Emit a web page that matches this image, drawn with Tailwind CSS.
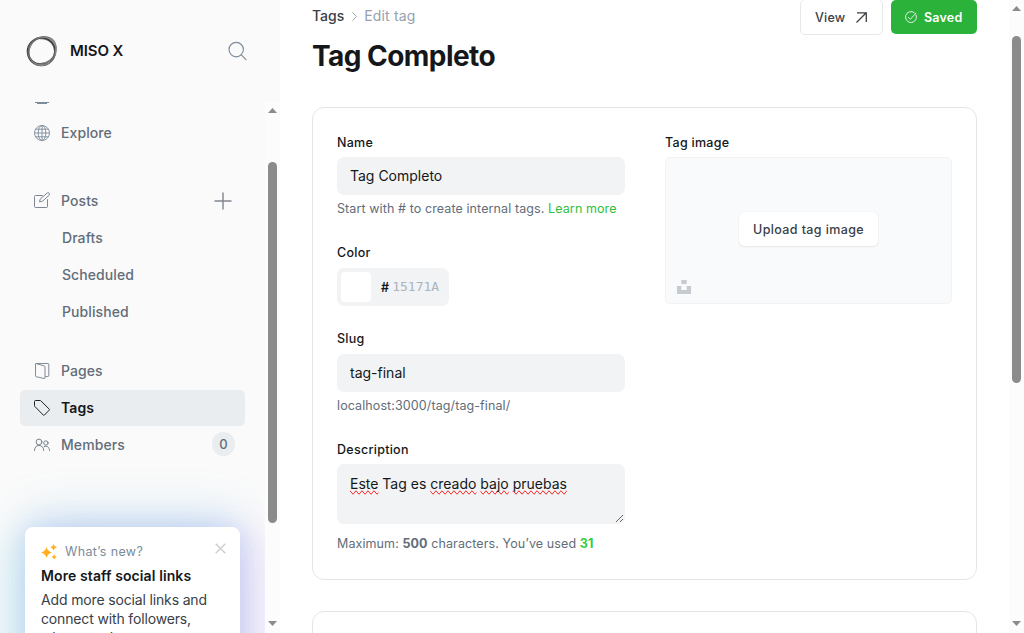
<!DOCTYPE html>
<html lang="en">
<head>
<meta charset="utf-8">
<title>Tags - MISO X</title>
<script src="https://cdn.jsdelivr.net/npm/@tailwindcss/browser@4"></script>
</head>
<body class="h-[633px] w-[1024px] overflow-hidden bg-white font-['Inter',sans-serif] text-[#15171a]">
<div class="flex h-full w-full">

  <!-- Sidebar -->
  <nav class="flex h-full w-[280px] shrink-0 flex-col bg-[#fafafa]">
    <header class="flex h-[102px] shrink-0 items-center pl-[26px] pr-[33px]">
      <svg class="size-8" viewBox="0 0 32 32" fill="none">
        <path fill="#000" fill-opacity=".3" d="M14 2.500C19 .2 26 1.500 29 6c2 4 2.500 9 1 14-1.500 4.500-5 8-8 9.500 4-4 7-9 6-15C27 8 21 4 14 4.500z"/>
        <circle cx="15.300" cy="16.600" r="13.900" stroke="#333" stroke-width="1.400"/>
        <ellipse cx="16.600" cy="15.300" rx="14.600" ry="12.800" stroke="#777" stroke-width="1.200" transform="rotate(-38 16 16)"/>
        <ellipse cx="16.700" cy="16" rx="13" ry="14.600" stroke="#888" stroke-width="1" transform="rotate(32 16 16)"/>
        <circle cx="15.500" cy="16.300" r="13" stroke="#444" stroke-opacity=".7" stroke-width="1"/>
      </svg>
      <span class="ml-3 text-[15px] font-semibold tracking-[-0.1px]">MISO X</span>
      <svg class="ml-auto size-5" viewBox="0 0 20 20" fill="none" stroke="#7c8b9a" stroke-width="1.15" stroke-linecap="round"><circle cx="9.200" cy="8.600" r="7.200"/><path d="M14.300 13.800l4.700 4.900"/></svg>
    </header>
    <div class="flex min-h-0 flex-1">
      <div class="flex w-[265px] flex-col overflow-hidden text-[14px] font-medium tracking-[0.08px] text-[#626d79]">
        <div class="h-[13px] shrink-0 pl-[34px]"><svg class="h-[2px] w-4" viewBox="0 0 16 2" fill="none" stroke="#7c8b9a"><path d="M1 .5h14M3 1.500h10"/></svg></div>
        <div class="flex h-9 shrink-0 items-center pl-[34px]">
          <svg class="size-4" viewBox="0 0 16 16" fill="none" stroke="#7c8b9a" stroke-width=".9"><circle cx="8" cy="8" r="7.500"/><ellipse cx="8" cy="8" rx="3.800" ry="7.500"/><path d="M8 .5v15M.5 8h15M1.600 4.200h12.800M1.600 11.800h12.800"/></svg>
          <span class="mb-[2px] ml-[11px]">Explore</span>
        </div>
        <div class="mt-8 flex h-9 shrink-0 items-center pl-[34px] pr-[33px]">
          <svg class="mb-[2px] size-4" viewBox="0 0 16 16" fill="none" stroke="#707b88" stroke-width=".9" stroke-linejoin="round" stroke-linecap="round"><path d="M8.400 3.500H1.500a1 1 0 0 0-1 1v10a1 1 0 0 0 1 1h11a1 1 0 0 0 1-1V7.600"/><path d="M8.300 9.200L5.500 9.900l.7-2.800L13.300.9a1.450 1.450 0 0 1 2 2z"/></svg>
          <span class="mb-[2px] ml-[11px]">Posts</span>
          <svg class="ml-auto size-[18px]" viewBox="0 0 18 18" stroke="#7f868d" stroke-width="1.400"><path d="M9 .5v17M.5 9h17"/></svg>
        </div>
        <div class="mt-px flex h-9 shrink-0 items-center pb-[2px] pl-[62px]">Drafts</div>
        <div class="mt-px flex h-9 shrink-0 items-center pb-[2px] pl-[62px]">Scheduled</div>
        <div class="mt-px flex h-9 shrink-0 items-center pb-[2px] pl-[62px]">Published</div>
        <div class="mt-[23px] flex h-9 shrink-0 items-center pl-[34px]">
          <svg class="size-4" viewBox="0 0 16 16" fill="none" stroke="#7c8591" stroke-width=".95" stroke-linejoin="round"><path d="M1.500 1.500a1 1 0 0 1 1-1h11.500a.8.800 0 0 1 .8.800v11.200a1 1 0 0 1-1 1h-2.500"/><path d="M1.500 1.300v11.500a.9.900 0 0 0 .7.900l7.900 1.800a.7.700 0 0 0 .9-.7V4a1 1 0 0 0-.7-1L2.300.6a.6.600 0 0 0-.8.7z"/></svg>
          <span class="mb-[2px] ml-[11px]">Pages</span>
        </div>
        <div class="ml-5 mr-5 mt-px flex h-9 shrink-0 items-center rounded-[5px] bg-[#e9edf0] pl-[14px] font-semibold text-[#15171a]">
          <svg class="size-4" viewBox="0 0 16 16" fill="none" stroke="#15171a" stroke-width=".95" stroke-linejoin="round"><path d="M.5 1.500v4.200a1 1 0 0 0 .3.700l8.500 8.700a.8.800 0 0 0 1.100 0l4.800-4.900a.8.800 0 0 0 0-1.100L6.800.8a1 1 0 0 0-.7-.3H1.500a1 1 0 0 0-1 1z"/></svg>
          <span class="mb-[2px] ml-[11px]">Tags</span>
        </div>
        <div class="mt-px flex h-9 shrink-0 items-center pl-[34px] pr-[30px]">
          <svg class="size-4" viewBox="0 0 16 16" fill="none" stroke="#707b88" stroke-width=".95" stroke-linecap="round"><circle cx="5" cy="5" r="2.900"/><path d="M.5 13.500c0-3.200 1.800-5 4.500-5s4.700 1.900 4.700 5"/><circle cx="11.900" cy="6" r="2.200"/><path d="M10.200 9.600c3-1.300 5.300.7 5.300 3.900"/></svg>
          <span class="mb-[2px] ml-[11px]">Members</span>
          <span class="mb-[2px] ml-auto flex h-6 w-[23px] items-center justify-center rounded-full bg-[#e9edf0] pt-px text-[13px]">0</span>
        </div>
        <div class="ml-[25px] mt-16 h-[180px] w-[215px] shrink-0 rounded-[8px] bg-white px-4 pt-4 font-normal shadow-[0_0_24px_rgba(120,150,235,0.20),-24px_12px_40px_rgba(90,200,225,0.16),24px_10px_40px_rgba(165,100,245,0.15),0_-16px_44px_rgba(80,165,225,0.18)]">
          <div class="flex h-[18px] items-center">
            <svg class="size-4" viewBox="0 0 16 16" fill="#ffb020"><path d="M5.500 3q1.100 4.300 5.500 5.500Q6.600 9.700 5.500 14 4.400 9.700 0 8.500 4.400 7.300 5.500 3z"/><path d="M12.500 0q.5 2.600 3.500 3.200-3 .7-3.500 3.200-.5-2.500-3.200-3.200Q12 2.600 12.500 0zM13.200 10.300q.4 2.100 2.600 2.600-2.200.6-2.600 2.700-.5-2.100-2.700-2.700 2.200-.5 2.700-2.600z"/></svg>
            <span class="ml-2 text-[12.500px] tracking-[0.35px] text-[#7c8b9a]">What’s new?</span>
            <svg class="mb-[7px] ml-auto mr-[-2px] size-[11px]" viewBox="0 0 11 11" stroke="#cfcfcf" stroke-width="1.500"><path d="M.7.7l9.600 9.600M10.300.7L.7 10.300"/></svg>
          </div>
          <div class="mt-[5px] whitespace-nowrap text-[14px] font-semibold leading-5 tracking-[0.1px] text-[#15171a]">More staff social links</div>
          <p class="mt-[4px] whitespace-nowrap text-[14px] leading-[19px] tracking-[-0.15px] text-[#394047]">Add more social links and<br>connect with followers,<br>wherever they are.</p>
        </div>
      </div>
      <!-- Sidebar scrollbar -->
      <div class="flex w-[15px] flex-col items-center bg-[#fcfcfc] pt-[6px]">
        <svg class="h-[5px] w-[9px] shrink-0" viewBox="0 0 9 5" fill="#8b8b8b"><path d="M0 5L4.500 0 9 5z"/></svg>
        <div class="mt-[49px] h-[361px] w-[9px] shrink-0 rounded-full bg-[#8b8b8b]"></div>
        <svg class="mt-[98px] h-[5px] w-[9px] shrink-0" viewBox="0 0 9 5" fill="#8b8b8b"><path d="M0 0L4.500 5 9 0z"/></svg>
      </div>
    </div>
  </nav>

  <!-- Tag editor -->
  <main class="flex h-full w-[729px] shrink-0 flex-col overflow-hidden pl-8 pr-8">
    <header class="flex h-[107px] shrink-0 justify-between">
      <div>
        <div class="mt-[5px] flex h-5 items-center text-[14px]">
          <span class="font-medium text-[#394047]">Tags</span>
          <svg class="ml-2 mr-[7px] mt-[2px] h-[9px] w-[5px]" viewBox="0 0 5 9" fill="none" stroke="#95a1ad" stroke-width=".9"><path d="M.4.4l4.100 4.100L.4 8.600"/></svg>
          <span class="tracking-[0.15px] text-[#95a1ad]">Edit tag</span>
        </div>
        <h1 class="mt-[11px] whitespace-nowrap text-[28px] font-bold leading-10 tracking-[-0.55px]">Tag Completo</h1>
      </div>
      <div class="flex h-[34px] gap-2 text-[12.500px] font-medium tracking-[0.2px]">
        <div class="mt-[-1px] flex h-9 w-[83px] items-center rounded-[5px] border border-[#e5e8eb] pl-[14px] text-[#394047]"><span class="mt-[2px]">View</span>
          <svg class="ml-[11px] mt-px size-[11px]" viewBox="0 0 11 11" fill="none" stroke="#394047" stroke-width="1.300"><path d="M.5 10.500l10-10M1 .8h9.300V10"/></svg>
        </div>
        <div class="flex h-[34px] w-[86px] items-center rounded-[5px] bg-[#2ab23a] pl-[14px] font-semibold text-white">
          <svg class="mr-[7px] size-3" viewBox="0 0 12 12" fill="none" stroke="#fff" stroke-width=".85" stroke-linecap="round"><path d="M11.100 3.900A5.500 5.500 0 1 1 9.300 1.600"/><path d="M3.200 6.200l2.100 2.100 5.600-6.100"/></svg><span class="mt-[2px]">Saved</span>
        </div>
      </div>
    </header>

    <section class="flex h-[473px] shrink-0 gap-10 rounded-[12px] border border-[#e3e6e9] px-6 pt-[26px] text-[12.500px] tracking-[0.1px]">
      <div class="w-[288px]">
        <label class="block h-[18px] font-medium leading-[18px] tracking-[0.28px]">Name</label>
        <div class="mt-[5px] flex h-[38px] items-center rounded-[7px] bg-[#f1f3f4] px-[13px] pb-[2px] text-[14px] tracking-normal">Tag Completo</div>
        <p class="mt-1 h-5 whitespace-nowrap leading-5 text-[#626d79]">Start with # to create internal tags. <a class="text-[#30bf40]">Learn more</a></p>

        <label class="mt-[25px] block h-[18px] font-medium leading-[18px] tracking-[0.28px]">Color</label>
        <div class="mt-[6px] flex h-[38px] w-[112px] items-center rounded-[7px] bg-[#f1f3f4] pl-1">
          <span class="size-[30px] rounded-[4px] bg-white"></span>
          <span class="ml-[10px] mt-[2px] font-semibold">#</span>
          <span class="ml-[3px] font-['DejaVu_Sans_Mono',monospace] text-[13px] tracking-normal text-[#abb4be]">15171A</span>
        </div>

        <label class="mt-6 block h-[18px] font-medium leading-[18px] tracking-[0.28px]">Slug</label>
        <div class="mt-[6px] flex h-[38px] items-center rounded-[7px] bg-[#f1f3f4] px-[13px] pb-[2px] text-[14px] tracking-normal">tag-final</div>
        <p class="mt-1 h-5 leading-5 text-[#626d79]">localhost:3000/tag/tag-final/</p>

        <label class="mt-[25px] block h-[18px] font-medium leading-[18px] tracking-[0.28px]">Description</label>
        <div class="mt-[5px] h-[60px] resize-y overflow-auto rounded-[7px] border border-[#f1f3f4] bg-[#f1f3f4] px-[12px] pt-[8px] text-[14px] leading-[22px] tracking-normal"><span class="[text-decoration-line:spelling-error]">Este</span> Tag es <span class="[text-decoration-line:spelling-error]">creado</span> <span class="[text-decoration-line:spelling-error]">bajo</span> <span class="[text-decoration-line:spelling-error]">pruebas</span></div>
        <p class="mt-[10px] h-5 whitespace-nowrap leading-5 text-[#626d79]">Maximum: <b class="font-bold">500</b> characters. You’ve used <b class="font-bold text-[#30cf43]">31</b></p>
      </div>

      <div class="w-[287px]">
        <label class="block h-[18px] font-medium leading-[18px] tracking-[0.28px]">Tag image</label>
        <div class="relative mt-[5px] flex h-[147px] items-center justify-center rounded-[5px] border border-[#f1f3f4] bg-[#f9fafc]">
          <div class="mb-[3px] flex h-[34px] w-[139px] items-center justify-center rounded-[5px] bg-white pt-[2px] font-medium tracking-[0.38px] text-[#394047] shadow-[0_0_1px_rgba(0,0,0,0.12),0_1px_2px_rgba(0,0,0,0.07)]">Upload tag image</div>
          <svg class="absolute bottom-[9px] left-[11px] h-[14px] w-[14px]" viewBox="0 0 14 14" fill="#c6cbd0"><path d="M4.300 0h5.400v4H4.300zM0 6h4.300v4h5.400V6H14v8H0z"/></svg>
        </div>
      </div>
    </section>

    <section class="mt-[31px] h-[80px] shrink-0 rounded-[12px] border border-[#e3e6e9]"></section>
  </main>

  <!-- Page scrollbar -->
  <div class="flex w-[15px] flex-col items-center bg-[#fcfcfc] pt-[6px]">
    <svg class="h-[5px] w-[9px] shrink-0" viewBox="0 0 9 5" fill="#8b8b8b"><path d="M0 5L4.500 0 9 5z"/></svg>
    <div class="mt-[25px] h-[347px] w-[9px] shrink-0 rounded-full bg-[#8b8b8b]"></div>
    <svg class="mt-[238px] h-[5px] w-[9px] shrink-0" viewBox="0 0 9 5" fill="#8b8b8b"><path d="M0 0L4.500 5 9 0z"/></svg>
  </div>
</div>
</body>
</html>
